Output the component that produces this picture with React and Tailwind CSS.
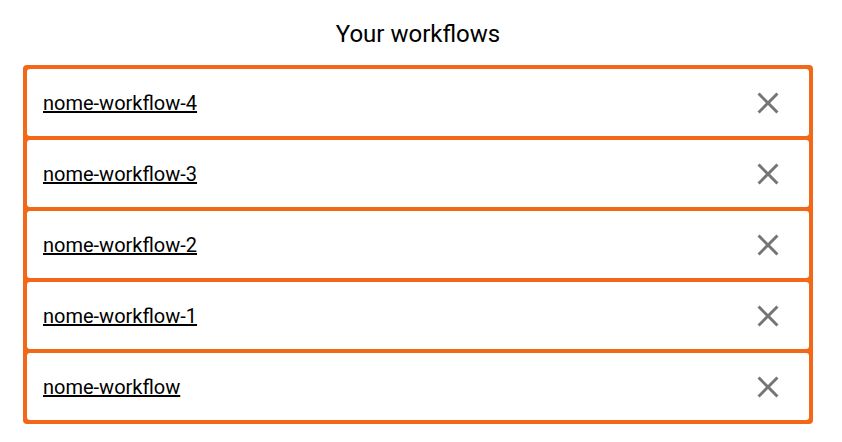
import React from 'react';

const workflows = ['nome-workflow-4', 'nome-workflow-3', 'nome-workflow-2', 'nome-workflow-1', 'nome-workflow'];

const CloseIcon = () => (
    <svg viewBox="0 0 24 24" className="h-9 w-9" fill="#757575">
        <path d="M19 6.41 17.59 5 12 10.59 6.41 5 5 6.41 10.59 12 5 17.59 6.41 19 12 13.41 17.59 19 19 17.59 13.41 12z" />
    </svg>
);

const App = () => {
    return (
        <div className="min-h-[442px] bg-white font-['Roboto',sans-serif] text-black">
            <div className="ml-[23px] w-[790px]">
                <h2 className="h-[65px] pt-[18px] text-center text-[24px] leading-[32px]">Your workflows</h2>
                <div className="flex flex-col gap-[4px] rounded-[4px] bg-[#f26818] p-[4px]">
                    {workflows.map((name) => (
                        <div key={name} className="flex h-[67px] items-center justify-between rounded-[3px] bg-white pl-[16px] pr-[23px]">
                            <a href="#" className="text-[20px] underline">{name}</a>
                            <CloseIcon />
                        </div>
                    ))}
                </div>
            </div>
        </div>
    );
};

export default App;
